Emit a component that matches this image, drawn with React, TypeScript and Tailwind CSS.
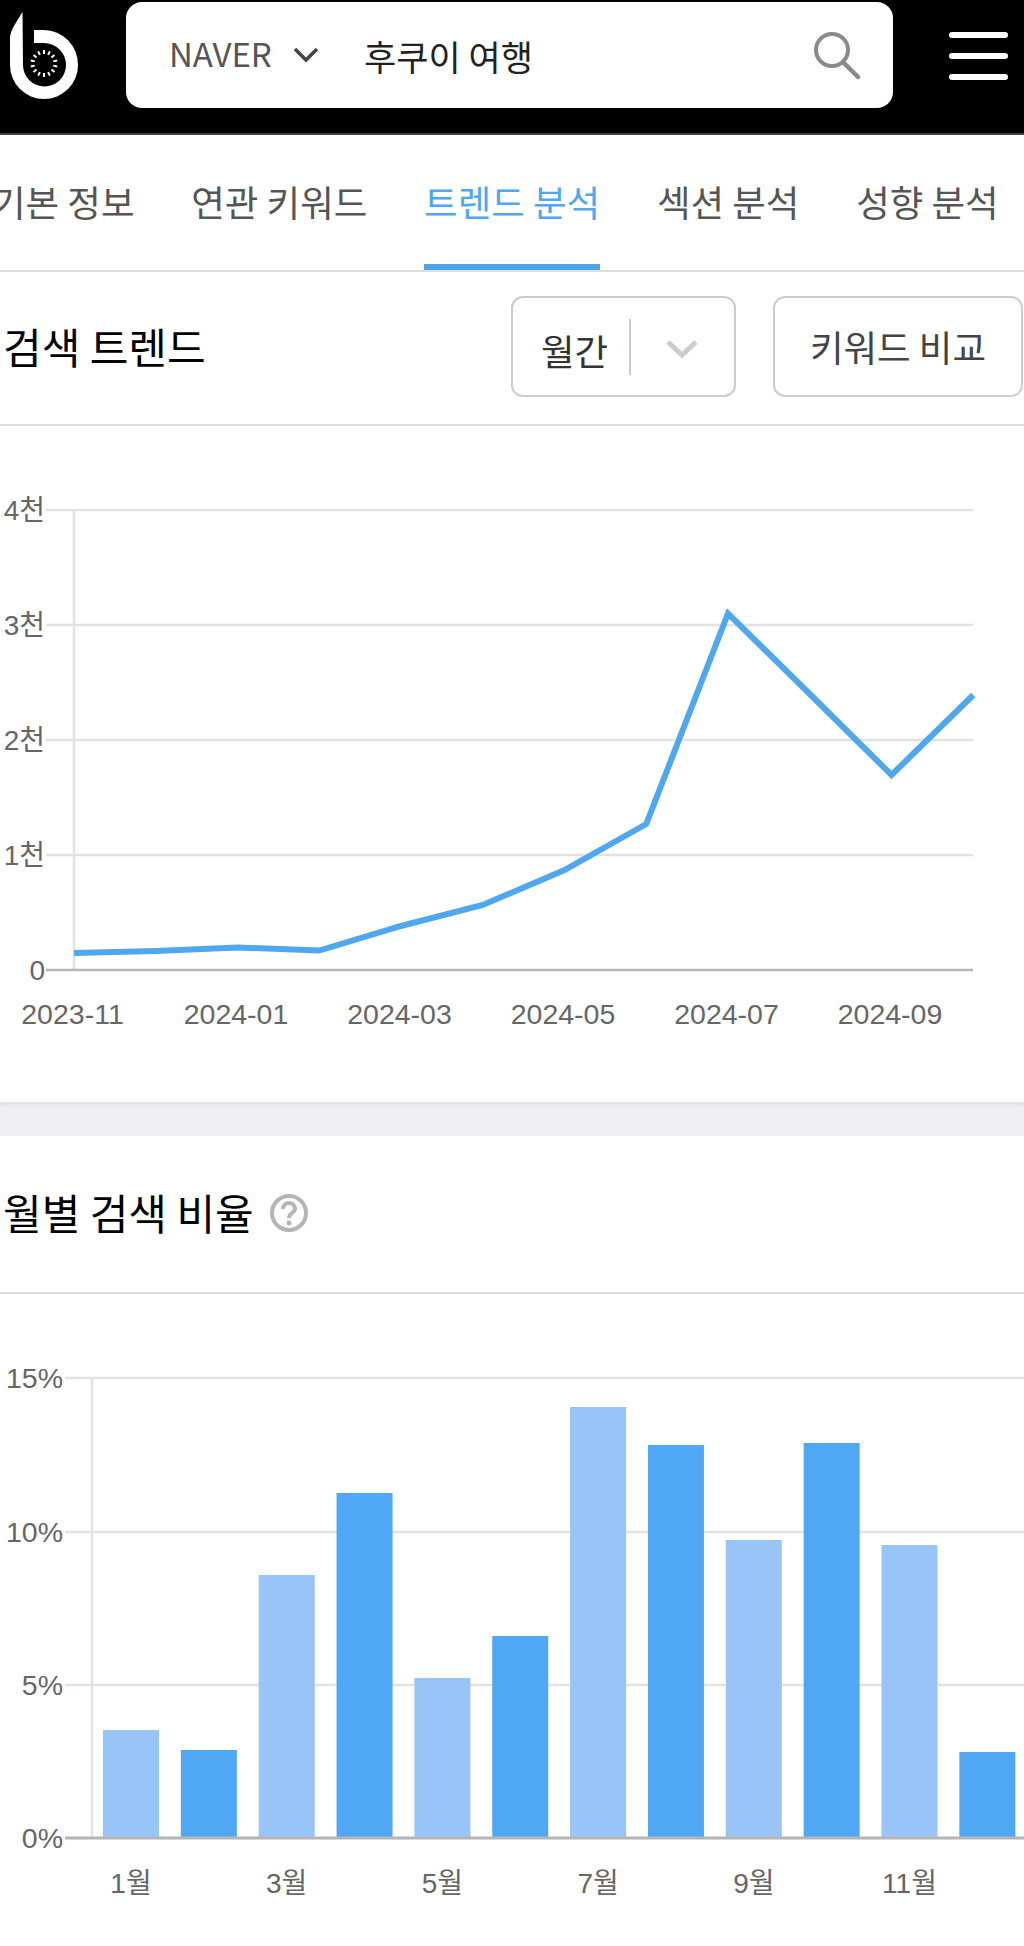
import React from 'react';

const KR = "font-['Noto_Sans_CJK_KR','Noto_Sans',sans-serif]";
const AXIS_FONT = "'Liberation Sans','Noto Sans CJK KR',sans-serif";

const Logo = () => {
    const dots = Array.from({ length: 14 }, (_, i) => (i * 360) / 14);
    return (
        <svg width="90" height="110" viewBox="0 0 90 110" className="shrink-0">
            <path
                fill="#fff"
                d="M22.5 12 C18 20 10 30 10 38 L10 65 A34 34 0 0 0 78 65 A34 35 0 0 0 44 30 L34 30 L34 43 L44 43 A22 22 0 0 1 66 65 A21.5 21.5 0 0 1 23 65 Z"
            />
            {dots.map(a => (
                <line
                    key={a}
                    x1="44"
                    y1="50"
                    x2="44"
                    y2="54"
                    stroke="#fff"
                    strokeWidth="2"
                    transform={`rotate(${a} 44 63.5)`}
                />
            ))}
        </svg>
    );
};

const Header = () => (
    <header className="h-[135px] bg-black border-b-2 border-[#444] flex items-start">
        <Logo />
        <div className="mt-[2px] ml-[36px] w-[767px] h-[106px] bg-white rounded-[16px] flex items-center pl-[43px] pr-[30px]">
            <span className={`${KR} text-[33px] text-[#555] w-[104px] leading-none -mt-[3px]`}>NAVER</span>
            <svg width="26" height="16" viewBox="0 0 26 16" className="ml-[20px] shrink-0">
                <path d="M2 2 L13 13 L24 2" fill="none" stroke="#444" strokeWidth="3.5" />
            </svg>
            <span className={`${KR} ml-[45px] text-[35px] text-[#222] leading-none`}>후쿠이 여행</span>
            <svg width="50" height="50" viewBox="0 0 50 50" className="ml-auto mr-[1px] shrink-0">
                <circle cx="20" cy="20" r="16" fill="none" stroke="#8a8a8a" strokeWidth="4" />
                <path d="M31 32 L46 47" stroke="#8a8a8a" strokeWidth="4.5" strokeLinecap="round" />
            </svg>
        </div>
        <div className="ml-[56px] mt-[32px] w-[59px] flex flex-col gap-[15px]">
            <div className="h-[6px] bg-white rounded-full" />
            <div className="h-[6px] bg-white rounded-full" />
            <div className="h-[6px] bg-white rounded-full" />
        </div>
    </header>
);

const TABS = ['기본 정보', '연관 키워드', '트렌드 분석', '섹션 분석', '성향 분석'];

const Tabs = () => (
    <nav className="h-[137px] border-b-2 border-[#ddd] overflow-hidden flex gap-[56.75px] -ml-[8px]">
        {TABS.map(t => (
            <div
                key={t}
                className={`${KR} h-[135px] pt-[5px] flex items-center whitespace-nowrap text-[36.5px] border-b-[6px] ${
                    t === '트렌드 분석' ? 'text-[#4fa8ee] border-[#4fa3e8]' : 'text-[#555] border-transparent'
                }`}
            >
                {t}
            </div>
        ))}
    </nav>
);

const SectionTitle = ({ children }: { children: React.ReactNode }) => (
    <h2 className={`${KR} text-[42px] text-black font-normal leading-none ml-[3px] -mt-[4px]`}>{children}</h2>
);

const TrendControls = () => (
    <div className="ml-auto mr-[1px] -mt-[3px] flex gap-[37px]">
        <div className="w-[225px] h-[101px] border-[2.5px] border-[#ccc] rounded-[12px] flex items-center pl-[28px]">
            <span className={`${KR} text-[36.5px] text-[#333] mt-[9px]`}>월간</span>
            <div className="ml-[21px] w-[2px] h-[56px] bg-[#ccc]" />
            <svg width="34" height="20" viewBox="0 0 34 20" className="ml-[34px] mt-[4px]">
                <path d="M3 3 L17 16 L31 3" fill="none" stroke="#ccc" strokeWidth="5" />
            </svg>
        </div>
        <div className={`${KR} w-[250px] h-[101px] pt-[2px] border-[2.5px] border-[#ccc] rounded-[12px] flex items-center justify-center text-[36.5px] text-[#444]`}>
            키워드 비교
        </div>
    </div>
);

// y는 페이지 좌표 기준, svg 시작점(426)을 빼서 사용
const TREND_TOP = 426;
const TREND_POINTS = [953, 951, 947.5, 950.5, 926, 905, 870, 824, 613.5, 694, 775, 695];
const TREND_GRID = [
    { y: 510, label: '4천' },
    { y: 625, label: '3천' },
    { y: 740, label: '2천' },
    { y: 855, label: '1천' },
];

const TrendChart = () => {
    const x = (i: number) => 74 + i * 81.75;
    const pts = TREND_POINTS.map((y, i) => `${x(i)},${y - TREND_TOP}`).join(' ');
    return (
        <svg width="1024" height="676" viewBox="0 0 1024 676" className="block" fontFamily={AXIS_FONT}>
            <line x1="74" y1={510 - TREND_TOP} x2="74" y2={970 - TREND_TOP} stroke="#e2e2e2" strokeWidth="2.5" />
            {TREND_GRID.map(g => (
                <g key={g.label}>
                    <line x1="46" y1={g.y - TREND_TOP} x2="973" y2={g.y - TREND_TOP} stroke="#e2e2e2" strokeWidth="2.5" />
                    <text x="45" y={g.y - TREND_TOP + 10} textAnchor="end" fontSize="28" fill="#666">{g.label}</text>
                </g>
            ))}
            <line x1="46" y1={970 - TREND_TOP} x2="973" y2={970 - TREND_TOP} stroke="#b5b5b5" strokeWidth="2.5" />
            <text x="45" y={970 - TREND_TOP + 10} textAnchor="end" fontSize="28" fill="#666">0</text>
            <polyline points={pts} fill="none" stroke="#4fa8ee" strokeWidth="6" strokeLinejoin="miter" />
            {['2023-11', '2024-01', '2024-03', '2024-05', '2024-07', '2024-09'].map((l, i) => (
                <text key={l} x={x(i * 2) - 1.5} y={1024 - TREND_TOP} textAnchor="middle" fontSize="28.5" fill="#666">{l}</text>
            ))}
        </svg>
    );
};

const RATIO_TOP = 1294;
const BAR_TOPS = [1730, 1750, 1575, 1493, 1678, 1636, 1407, 1445, 1540, 1443, 1545, 1752];
const RATIO_GRID = [
    { y: 1378, label: '15%' },
    { y: 1532, label: '10%' },
    { y: 1685, label: '5%' },
];

const RatioChart = () => {
    const bottom = 1838;
    const x = (i: number) => 103 + i * 77.85;
    return (
        <svg width="1024" height="652" viewBox="0 0 1024 652" className="block" fontFamily={AXIS_FONT}>
            <line x1="92" y1={1378 - RATIO_TOP} x2="92" y2={bottom - RATIO_TOP} stroke="#e2e2e2" strokeWidth="2.5" />
            {RATIO_GRID.map(g => (
                <g key={g.label}>
                    <line x1="65" y1={g.y - RATIO_TOP} x2="1024" y2={g.y - RATIO_TOP} stroke="#e2e2e2" strokeWidth="2.5" />
                    <text x="63" y={g.y - RATIO_TOP + 10} textAnchor="end" fontSize="28.5" fill="#666">{g.label}</text>
                </g>
            ))}
            {BAR_TOPS.map((top, i) => (
                <rect
                    key={i}
                    x={x(i)}
                    y={top - RATIO_TOP}
                    width="56"
                    height={bottom - top}
                    fill={i % 2 === 0 ? '#99c4f7' : '#50a8f4'}
                />
            ))}
            <line x1="65" y1={bottom - RATIO_TOP} x2="1024" y2={bottom - RATIO_TOP} stroke="#b5b5b5" strokeWidth="3" />
            <text x="63" y={bottom - RATIO_TOP + 10} textAnchor="end" fontSize="28.5" fill="#666">0%</text>
            {['1월', '3월', '5월', '7월', '9월', '11월'].map((l, i) => (
                <text key={l} x={x(i * 2) + 28} y={1893 - RATIO_TOP} textAnchor="middle" fontSize="28" fill="#666">{l}</text>
            ))}
        </svg>
    );
};

const HelpIcon = () => (
    <svg width="38" height="38" viewBox="0 0 38 38" className="ml-[16px] -mt-[2px]">
        <circle cx="19" cy="19" r="17" fill="none" stroke="#b5b5b5" strokeWidth="4" />
        <path d="M13 15 C13 7 25 7 25 15 C25 19 19 19 19 24" fill="none" stroke="#b5b5b5" strokeWidth="4" />
        <circle cx="19" cy="29" r="2.5" fill="#b5b5b5" />
    </svg>
);

export default function App() {
    return (
        <div className="w-[1024px] h-[1946px] overflow-hidden bg-white">
            <Header />
            <Tabs />
            <div className="h-[154px] border-b-2 border-[#ddd] flex items-center">
                <SectionTitle>검색 트렌드</SectionTitle>
                <TrendControls />
            </div>
            <TrendChart />
            <div className="h-[34px] bg-[#f0f0f2] shadow-[inset_0_6px_6px_-4px_rgba(0,0,0,0.08)]" />
            <div className="h-[158px] border-b-2 border-[#ddd] flex items-center">
                <SectionTitle>월별 검색 비율</SectionTitle>
                <HelpIcon />
            </div>
            <RatioChart />
        </div>
    );
}
